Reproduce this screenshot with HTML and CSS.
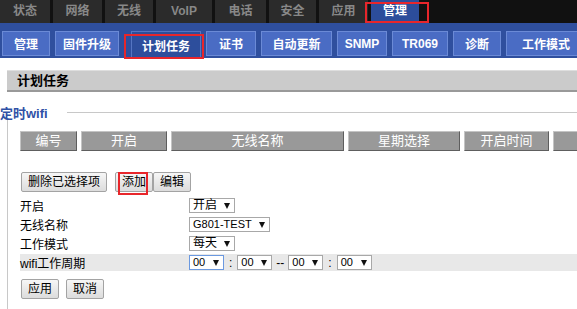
FILE: index.html
```html
<!DOCTYPE html>
<html lang="zh-CN">
<head>
<meta charset="utf-8">
<title>计划任务</title>
<link rel="stylesheet" href="styles.css">
</head>
<body>
<div class="page">
  <nav class="topnav">
    <a class="tab">状态</a>
    <a class="tab">网络</a>
    <a class="tab">无线</a>
    <a class="tab">VoIP</a>
    <a class="tab">电话</a>
    <a class="tab">安全</a>
    <a class="tab">应用</a>
    <a class="tab tab--active">管理<span class="mark mark--tab"></span></a>
  </nav>
  <nav class="subnav">
    <a class="sbtn">管理</a>
    <a class="sbtn">固件升级</a>
    <a class="sbtn sbtn--active">计划任务<span class="mark mark--sub"></span></a>
    <a class="sbtn">证书</a>
    <a class="sbtn">自动更新</a>
    <a class="sbtn">SNMP</a>
    <a class="sbtn">TR069</a>
    <a class="sbtn">诊断</a>
    <a class="sbtn">工作模式</a>
  </nav>

  <h2 class="section-title">计划任务</h2>

  <div class="legend-row">
    <span class="legend">定时wifi</span>
    <span class="legend-line"></span>
  </div>

  <div class="fs-body">
    <div class="thead">
      <div class="th th--num">编号</div>
      <div class="th th--on">开启</div>
      <div class="th th--ssid">无线名称</div>
      <div class="th th--week">星期选择</div>
      <div class="th th--start">开启时间</div>
      <div class="th th--end"></div>
    </div>

    <div class="btn-row">
      <button class="gbtn">删除已选择项</button>
      <button class="gbtn gbtn--add">添加<span class="mark mark--add"></span></button>
      <button class="gbtn">编辑</button>
    </div>

    <div class="form">
      <div class="frow">
        <span class="flabel">开启</span>
        <span class="select select--w46"><span>开启</span><i class="arrow"></i></span>
      </div>
      <div class="frow">
        <span class="flabel">无线名称</span>
        <span class="select select--w81 select--latin"><span>G801-TEST</span><i class="arrow"></i></span>
      </div>
      <div class="frow">
        <span class="flabel">工作模式</span>
        <span class="select select--w46"><span>每天</span><i class="arrow"></i></span>
      </div>
      <div class="frow frow--shade">
        <span class="flabel">wifi工作周期</span>
        <span class="select select--w35 select--latin select--focus"><span>00</span><i class="arrow"></i></span>
        <span class="sep sep--colon">:</span>
        <span class="select select--w35 select--latin"><span>00</span><i class="arrow"></i></span>
        <span class="sep sep--dash">--</span>
        <span class="select select--w35 select--latin"><span>00</span><i class="arrow"></i></span>
        <span class="sep sep--colon">:</span>
        <span class="select select--w35 select--latin"><span>00</span><i class="arrow"></i></span>
      </div>
    </div>

    <div class="btn-row btn-row--actions">
      <button class="gbtn">应用</button>
      <button class="gbtn gbtn--gap">取消</button>
    </div>
  </div>
</div>
</body>
</html>
```

FILE: styles.css
```css
html, body {
  margin: 0;
  padding: 0;
  overflow: hidden;
  background: #fff;
}

body {
  font-family: "Liberation Sans", "Noto Sans CJK SC", sans-serif;
  font-size: 12px;
  color: #000;
}

.page {
  width: 800px;
}

/* ---------- top navigation ---------- */
.topnav {
  display: flex;
  gap: 3px;
  height: 23px;
  background: #111;
}

.tab {
  position: relative;
  flex: 0 0 auto;
  height: 23px;
  line-height: 23px;
  text-align: center;
  background: #2b2b2b;
  color: #888;
  font-weight: bold;
  font-size: 12px;
}

.tab:nth-child(1) { width: 50px; }
.tab:nth-child(2) { width: 49px; }
.tab:nth-child(3) { width: 48px; }
.tab:nth-child(4) { width: 56px; }
.tab:nth-child(5) { width: 51px; }
.tab:nth-child(6) { width: 47px; }
.tab:nth-child(7) { width: 49px; }
.tab:nth-child(8) { width: 48px; }

.tab--active {
  background: #2c4d9b;
  color: #fff;
}

/* ---------- sub navigation ---------- */
.subnav {
  display: flex;
  gap: 5px;
  height: 35px;
  box-sizing: border-box;
  padding: 8px 0 0 2px;
  background: #2f4f9e;
}

.sbtn {
  position: relative;
  flex: 0 0 auto;
  box-sizing: border-box;
  height: 25px;
  display: flex;
  align-items: center;
  justify-content: center;
  background: #4a6cc4;
  border: 1px solid #6b8ad6;
  color: #fff;
  font-weight: bold;
  font-size: 12px;
}

.sbtn:nth-child(1) { width: 48px; }
.sbtn:nth-child(2) { width: 64px; }
.sbtn:nth-child(3) { width: 70px; }
.sbtn:nth-child(4) { width: 50px; }
.sbtn:nth-child(5) { width: 71px; }
.sbtn:nth-child(6) { width: 50px; }
.sbtn:nth-child(7) { width: 56px; }
.sbtn:nth-child(8) { width: 48px; }
.sbtn:nth-child(9) { width: 80px; }

.sbtn--active {
  margin-left: 7px;
  height: 27px;
  background: #2d4e9c;
  border-color: #5575c2;
  border-bottom: none;
}

/* ---------- red annotation boxes ---------- */
.mark {
  position: absolute;
  box-sizing: border-box;
  border: 2px solid #e8262b;
  pointer-events: none;
}

.mark--tab {
  left: -6px;
  top: 2px;
  width: 64px;
  height: 21px;
}

.mark--sub {
  left: -8px;
  top: 2px;
  width: 80px;
  height: 25px;
}

.mark--add {
  left: 2px;
  top: -1px;
  width: 30px;
  height: 23px;
}

/* ---------- section title ---------- */
.section-title {
  margin: 12px 0 0 7px;
  box-sizing: border-box;
  height: 22px;
  padding-left: 10px;
  background: #cbcbcb;
  border-top: 1px solid #dedede;
  border-bottom: 2px solid #999;
  font-size: 13px;
  font-weight: bold;
  line-height: 19px;
}

/* ---------- fieldset-like block ---------- */
.legend-row {
  display: flex;
  align-items: center;
  height: 16px;
  margin-top: 12px;
}

.legend {
  color: #2f51a6;
  font-size: 13px;
  font-weight: bold;
}

.legend-line {
  flex: 1;
  margin-left: 19px;
  border-top: 1px solid #c8c8c8;
}

.fs-body {
  margin-left: 7px;
  padding: 11px 0 20px 12px;
  border-left: 1px solid #c8c8c8;
}

.thead {
  display: flex;
  gap: 4px;
}

.th {
  flex: 0 0 auto;
  box-sizing: border-box;
  height: 20px;
  line-height: 18px;
  text-align: center;
  background: #999;
  color: #fff;
  font-size: 13px;
  border: 1px solid;
  border-color: #c4c4c4 #5e5e5e #5e5e5e #c4c4c4;
}

.th--num { width: 57px; }
.th--on { width: 86px; }
.th--ssid { width: 173px; }
.th--week { width: 112px; }
.th--start { width: 85px; }
.th--end { width: 110px; }

/* ---------- buttons ---------- */
.btn-row {
  display: flex;
  margin-top: 21px;
  padding-left: 1px;
}

.btn-row--actions {
  margin-top: 8px;
}

.gbtn {
  position: relative;
  box-sizing: border-box;
  height: 20px;
  margin: 0;
  padding: 0 6px;
  border: 1px solid #a3a3a3;
  border-radius: 2px;
  background: linear-gradient(#f6f6f6, #dcdcdc);
  color: #000;
  font-family: inherit;
  font-size: 12px;
  line-height: 18px;
}

.gbtn--add {
  margin-left: 8px;
}

.gbtn--gap {
  margin-left: 7px;
}

/* ---------- form ---------- */
.form {
  margin-top: 4px;
}

.frow {
  display: flex;
  align-items: center;
  height: 19px;
}

.frow--shade {
  height: 17px;
  margin: 1px 0;
  background: #e8e8e8;
}

.flabel {
  width: 169px;
  flex: 0 0 auto;
  font-size: 12px;
}

.select {
  box-sizing: border-box;
  height: 15px;
  display: inline-flex;
  align-items: center;
  justify-content: space-between;
  padding: 0 4px 0 3px;
  background: #fff;
  border: 1px solid #a8a8a8;
  font-size: 12px;
  line-height: 13px;
}

.select--latin {
  font-size: 11px;
}

.select--w46 { width: 46px; }
.select--w81 { width: 81px; }
.select--w35 { width: 35px; }

.select--focus {
  border-color: #6b99e0;
}

.arrow {
  width: 0;
  height: 0;
  border-left: 3.5px solid transparent;
  border-right: 3.5px solid transparent;
  border-top: 6px solid #111;
}

.sep {
  font-size: 12px;
}

.sep--colon {
  margin: 0 5px;
}

.sep--dash {
  margin: 0 4px;
}
```
